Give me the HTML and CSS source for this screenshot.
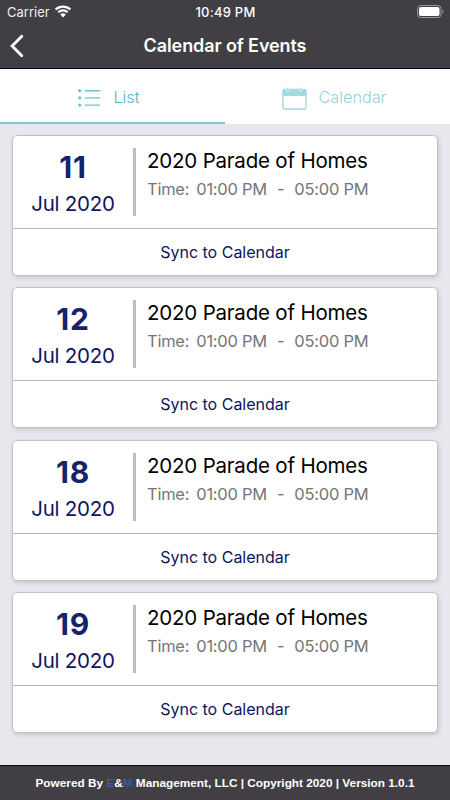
FILE: index.html
```
<!DOCTYPE html>
<html lang="en">
  <head>
    <meta charset="UTF-8">
    <meta name="viewport" content="width=device-width, initial-scale=1">
    <title>Calendar of Events</title>
    <link rel="stylesheet" href="styles.css">
  </head>
  <body>
    <header class="top">
      <div class="status-bar">
        <div class="carrier">
          <span>Carrier</span>
          <svg class="wifi" width="18" height="13" viewBox="0 0 18 13">
            <path d="M1.6 4.5a10.7 10.7 0 0 1 14.8 0M4.3 7.3a6.8 6.8 0 0 1 9.4 0" fill="none" stroke="#fff" stroke-width="2.2"/>
            <path d="M9 12.4 6.2 9.6a4 4 0 0 1 5.6 0z" fill="#fff"/>
          </svg>
        </div>
        <span class="clock">10:49 PM</span>
        <svg class="battery" width="27" height="13" viewBox="0 0 27 13">
          <rect x=".5" y=".5" width="23.5" height="12" rx="3" fill="none" stroke="#98979b"/>
          <rect x="2" y="2" width="20.5" height="9" rx="1.7" fill="#fff"/>
          <path d="M25.3 4.5c1.6.5 1.6 3.5 0 4z" fill="#98979b"/>
        </svg>
      </div>
      <div class="nav-bar">
        <svg class="back" width="16" height="24" viewBox="0 0 16 24">
          <path d="M12.8 2.3 3.1 12l9.7 9.7" fill="none" stroke="#fff" stroke-width="2.8" stroke-linecap="round"/>
        </svg>
        <h1>Calendar of Events</h1>
      </div>
    </header>

    <div class="tabs">
      <div class="tab active">
        <svg width="23" height="18" viewBox="0 0 23 18">
          <g fill="#6ac4ce">
            <circle cx="1.7" cy="1.7" r="1.6"/>
            <circle cx="1.7" cy="8.9" r="1.6"/>
            <circle cx="1.7" cy="16.1" r="1.6"/>
          </g>
          <path d="M7.2 1.7h14.6M7.2 8.9h14.6M7.2 16.1h14.6" stroke="#6ac4ce" stroke-width="1.4" stroke-linecap="round"/>
        </svg>
        <span>List</span>
      </div>
      <div class="tab">
        <svg width="25" height="23" viewBox="0 0 25 23">
          <path d="M2.5 2h20A2 2 0 0 1 24.5 4v5H.5V4a2 2 0 0 1 2-2z" fill="#a3d9e1"/>
          <rect x="1" y="2.5" width="23" height="19.5" rx="1.5" fill="none" stroke="#a3d9e1" stroke-width="1.4"/>
          <path d="M5.8 1v1.8M18.8 1v1.8" stroke="#fff" stroke-width="3.2" stroke-linecap="round"/>
          <path d="M5.8 1.3V3M18.8 1.3V3" stroke="#a3d9e1" stroke-width="1.7" stroke-linecap="round"/>
        </svg>
        <span>Calendar</span>
      </div>
    </div>

    <main class="events">
      <div class="card">
        <div class="event">
          <div class="date"><b>11</b><span>Jul 2020</span></div>
          <div class="info">
            <h2>2020 Parade of Homes</h2>
            <p><span>Time:</span><span>01:00 PM</span><span class="dash">-</span><span>05:00 PM</span></p>
          </div>
        </div>
        <div class="sync"><span>Sync to Calendar</span></div>
      </div>
      <div class="card">
        <div class="event">
          <div class="date"><b>12</b><span>Jul 2020</span></div>
          <div class="info">
            <h2>2020 Parade of Homes</h2>
            <p><span>Time:</span><span>01:00 PM</span><span class="dash">-</span><span>05:00 PM</span></p>
          </div>
        </div>
        <div class="sync"><span>Sync to Calendar</span></div>
      </div>
      <div class="card">
        <div class="event">
          <div class="date"><b>18</b><span>Jul 2020</span></div>
          <div class="info">
            <h2>2020 Parade of Homes</h2>
            <p><span>Time:</span><span>01:00 PM</span><span class="dash">-</span><span>05:00 PM</span></p>
          </div>
        </div>
        <div class="sync"><span>Sync to Calendar</span></div>
      </div>
      <div class="card">
        <div class="event">
          <div class="date"><b>19</b><span>Jul 2020</span></div>
          <div class="info">
            <h2>2020 Parade of Homes</h2>
            <p><span>Time:</span><span>01:00 PM</span><span class="dash">-</span><span>05:00 PM</span></p>
          </div>
        </div>
        <div class="sync"><span>Sync to Calendar</span></div>
      </div>
    </main>

    <footer>
      <span>Powered By <em>E</em>&amp;<em>M</em> Management, LLC | Copyright 2020 | Version 1.0.1</span>
    </footer>
  </body>
</html>
```
FILE: styles.css
```
* {
  box-sizing: border-box;
}

body {
  margin: 0;
  height: 800px;
  display: flex;
  flex-direction: column;
  overflow: hidden;
  background: #e8e7ed;
  font-family: Inter, "Liberation Sans", sans-serif;
  white-space: nowrap;
}

/* header */
.top {
  height: 69px;
  background: #413f44;
  border-bottom: 1px solid #0b0620;
  color: #fff;
}

.status-bar {
  height: 23px;
  padding: 0 6px 0 7px;
  display: grid;
  grid-template-columns: 1fr auto 1fr;
  align-items: center;
  font-size: 13px;
}

.carrier {
  display: flex;
  align-items: center;
  gap: 4px;
  color: #eee;
}

.clock {
  font-weight: 500;
  letter-spacing: .25px;
}

.battery {
  justify-self: end;
}

.nav-bar {
  height: 45px;
  padding: 0 9px;
  display: grid;
  grid-template-columns: 1fr auto 1fr;
  align-items: center;
}

.nav-bar h1 {
  margin: 0;
  font-size: 18px;
  font-weight: 600;
  letter-spacing: -.1px;
}

/* tabs */
.tabs {
  height: 55px;
  display: flex;
  background: #fff;
}

.tab {
  flex: 1;
  display: flex;
  align-items: center;
  justify-content: center;
  gap: 12px;
  padding: 2px 7px 0 0;
  border-bottom: 2px solid #fff;
  font-size: 16.2px;
  font-weight: 300;
  color: #92d3dc;
}

.tab svg {
  margin-top: 3px;
}

.tab.active {
  border-color: #7ac9d2;
  color: #4fbac7;
}

/* event cards */
.events {
  flex: 1;
  padding: 11px 12px 0;
  display: flex;
  flex-direction: column;
  gap: 11.4px;
}

.card {
  height: 141px;
  border: 1px solid #c2c2c4;
  border-radius: 5px;
  background: #fff;
  box-shadow: 1px 2px 4px rgba(0, 0, 0, .14);
}

.event {
  height: 93px;
  padding: 12px 0;
  display: flex;
  border-bottom: 1px solid #b5b5b5;
}

.date {
  width: 123px;
  border-right: 3px solid #bfbfbf;
  display: flex;
  flex-direction: column;
  align-items: center;
  color: #0d1560;
}

.date b {
  margin-top: 1px;
  font-size: 30px;
  line-height: 36px;
  font-weight: 700;
  letter-spacing: .8px;
  color: #15246a;
}

.date span {
  font-size: 20.5px;
  line-height: 38px;
  letter-spacing: -.25px;
}

.info {
  padding-left: 11px;
}

.info h2 {
  margin: 0;
  font-size: 20.5px;
  line-height: 26px;
  font-weight: 400;
  letter-spacing: -.2px;
  color: #000;
}

.info p {
  margin: 3px 0 0;
  display: flex;
  gap: 7px;
  font-size: 16.5px;
  line-height: 24px;
  font-weight: 400;
  letter-spacing: -.25px;
  color: #757575;
}

.dash {
  padding: 0 3px;
}

.sync {
  height: 46px;
  display: flex;
  align-items: center;
  justify-content: center;
  font-size: 16px;
  color: #0d1560;
}

footer {
  height: 35px;
  display: flex;
  align-items: center;
  justify-content: center;
  border-top: 1px solid #0b0a0d;
  background: #413f44;
  color: #fff;
  font-family: "Liberation Sans", Arial, sans-serif;
  font-size: 11.8px;
  font-weight: bold;
}

footer em {
  font-style: normal;
  color: #3b5ba5;
}
```
